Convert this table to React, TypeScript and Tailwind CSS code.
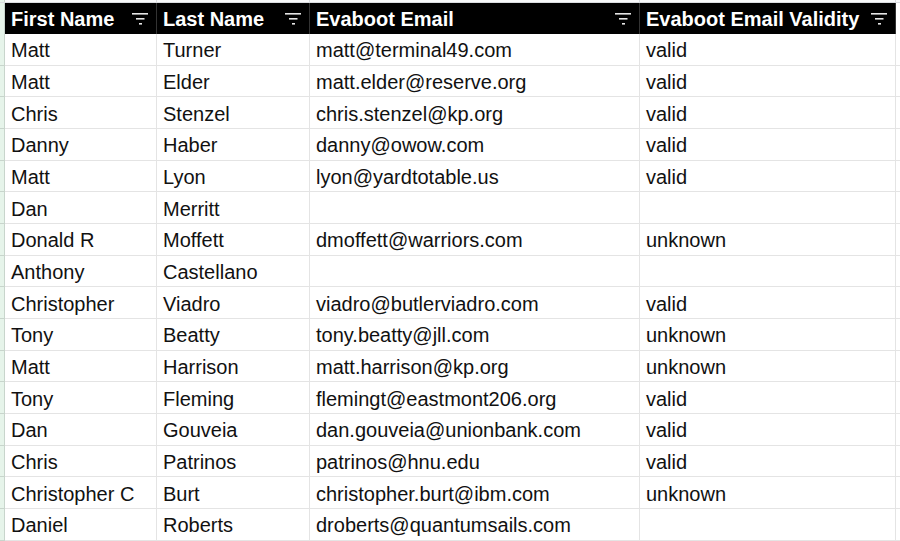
import React from "react";

type Row = [string, string, string, string];

const rows: Row[] = [
  ["Matt", "Turner", "matt@terminal49.com", "valid"],
  ["Matt", "Elder", "matt.elder@reserve.org", "valid"],
  ["Chris", "Stenzel", "chris.stenzel@kp.org", "valid"],
  ["Danny", "Haber", "danny@owow.com", "valid"],
  ["Matt", "Lyon", "lyon@yardtotable.us", "valid"],
  ["Dan", "Merritt", "", ""],
  ["Donald R", "Moffett", "dmoffett@warriors.com", "unknown"],
  ["Anthony", "Castellano", "", ""],
  ["Christopher", "Viadro", "viadro@butlerviadro.com", "valid"],
  ["Tony", "Beatty", "tony.beatty@jll.com", "unknown"],
  ["Matt", "Harrison", "matt.harrison@kp.org", "unknown"],
  ["Tony", "Fleming", "flemingt@eastmont206.org", "valid"],
  ["Dan", "Gouveia", "dan.gouveia@unionbank.com", "valid"],
  ["Chris", "Patrinos", "patrinos@hnu.edu", "valid"],
  ["Christopher C", "Burt", "christopher.burt@ibm.com", "unknown"],
  ["Daniel", "Roberts", "droberts@quantumsails.com", ""],
];

const widths = ["w-[152px]", "w-[153px]", "w-[330px]", "w-[256px]"];
const headers = ["First Name", "Last Name", "Evaboot Email", "Evaboot Email Validity"];

function FilterIcon() {
  return (
    <svg width="18" height="14" viewBox="0 0 18 14" className="shrink-0">
      <rect x="1" y="1" width="16" height="1.6" fill="#e5e5e5" />
      <rect x="5" y="6" width="8.5" height="1.6" fill="#e5e5e5" />
      <rect x="8" y="11" width="3" height="1.6" fill="#e5e5e5" />
    </svg>
  );
}

export default function App() {
  return (
    <div
      className="w-[900px] h-[541px] overflow-hidden bg-white text-[20px] text-[#111]"
      style={{ fontFamily: '"Liberation Sans", Arial, sans-serif' }}
    >
      {/* cut-off column letters */}
      <div className="flex h-[3px] bg-[#f8f9fa] border-b border-[#dadce0]">
        <div className="w-[5px] shrink-0 border-r border-[#c8d5cc] bg-[#e6f4ea]" />
        {widths.map((w, i) => (
          <div key={i} className={`${w} shrink-0 border-r border-[#dadce0]`} />
        ))}
        <div className="flex-1" />
      </div>

      {/* header */}
      <div className="flex h-[31px]">
        <div className="w-[5px] shrink-0 border-r border-[#c8d5cc] bg-[#e6f4ea]" />
        {headers.map((h, i) => (
          <div
            key={h}
            className={`${widths[i]} shrink-0 bg-black text-white font-bold flex items-center justify-between pl-[6px] pr-[7px] border-r border-[#333]`}
          >
            <span>{h}</span>
            <FilterIcon />
          </div>
        ))}
        <div className="flex-1 bg-white" />
      </div>

      {rows.map((r, ri) => (
        <div key={ri} className="flex h-[31.66px]">
          <div className="w-[5px] shrink-0 border-r border-b border-[#c8d5cc] bg-[#e6f4ea]" />
          {r.map((c, ci) => (
            <div
              key={ci}
              className={`${widths[ci]} shrink-0 flex items-center pl-[6px] pt-[2px] border-r border-b border-[#e4e4e4] whitespace-nowrap overflow-hidden`}
            >
              {c}
            </div>
          ))}
          <div className="flex-1 border-b border-[#e4e4e4]" />
        </div>
      ))}
    </div>
  );
}
